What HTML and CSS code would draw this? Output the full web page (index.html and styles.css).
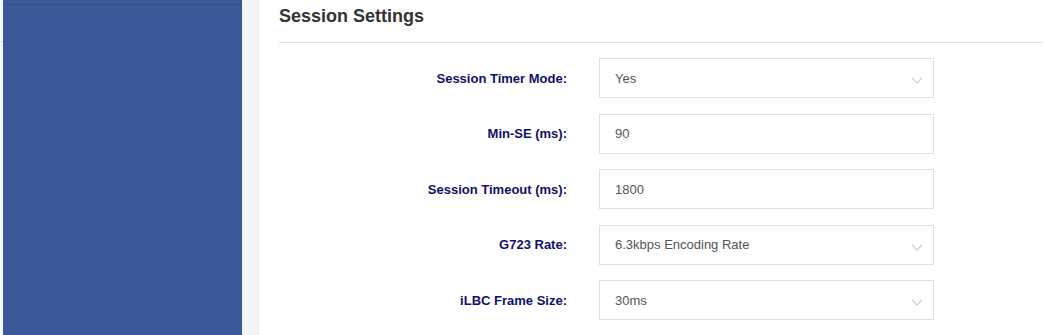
FILE: index.html
```html
<!DOCTYPE html>
<html lang="en">
<head>
    <meta charset="UTF-8">
    <meta name="viewport" content="width=device-width, initial-scale=1.0">
    <title>Session Settings</title>
    <link rel="stylesheet" href="styles.css">
</head>
<body>
    <div class="layout">
        <div class="edge"></div>
        <div class="sidebar">
            <div class="sidebar-top"></div>
        </div>
        <div class="gutter"></div>
        <div class="content">
            <h1 class="section-title">Session Settings</h1>

            <div class="form">
                <div class="form-row">
                    <label>Session Timer Mode:</label>
                    <div class="field select">
                        <span>Yes</span>
                        <svg class="chevron" width="12" height="7" viewBox="0 0 12 7"><path d="M1 1l5 5 5-5" fill="none" stroke="#c9ccd4" stroke-width="1.2"/></svg>
                    </div>
                </div>
                <div class="form-row">
                    <label>Min-SE (ms):</label>
                    <div class="field"><span>90</span></div>
                </div>
                <div class="form-row">
                    <label>Session Timeout (ms):</label>
                    <div class="field"><span>1800</span></div>
                </div>
                <div class="form-row">
                    <label>G723 Rate:</label>
                    <div class="field select">
                        <span>6.3kbps Encoding Rate</span>
                        <svg class="chevron" width="12" height="7" viewBox="0 0 12 7"><path d="M1 1l5 5 5-5" fill="none" stroke="#c9ccd4" stroke-width="1.2"/></svg>
                    </div>
                </div>
                <div class="form-row">
                    <label>iLBC Frame Size:</label>
                    <div class="field select">
                        <span>30ms</span>
                        <svg class="chevron" width="12" height="7" viewBox="0 0 12 7"><path d="M1 1l5 5 5-5" fill="none" stroke="#c9ccd4" stroke-width="1.2"/></svg>
                    </div>
                </div>
            </div>
        </div>
    </div>
</body>
</html>
```

FILE: styles.css
```css
body {
    margin: 0;
    font-family: "Liberation Sans", Arial, sans-serif;
    background-color: white;
    overflow: hidden;
}
.layout {
    display: flex;
    height: 335px;
}
.edge {
    width: 3px;
    flex-shrink: 0;
    background-color: #f7f7f9;
    background-image: linear-gradient(#dcdde2, #dcdde2);
    background-size: 3px 1px;
    background-position: 0 41px;
    background-repeat: no-repeat;
}
.sidebar {
    width: 239px;
    flex-shrink: 0;
    background-color: #3b5998;
}
.sidebar-top {
    height: 4px;
    border-bottom: 1px solid #34508a;
}
.gutter {
    width: 16px;
    flex-shrink: 0;
    background-color: #f3f5f9;
    border-right: 1px solid #e6e9f1;
}
.content {
    flex: 1;
    padding: 0 1px 0 20px;
}
.section-title {
    margin: 0;
    padding-top: 6px;
    height: 36px;
    font-size: 18px;
    line-height: 20px;
    font-weight: bold;
    color: #333;
    border-bottom: 1px solid #dfe0e6;
}
.form {
    display: flex;
    flex-direction: column;
    gap: 15.5px;
    padding-top: 15px;
}
.form-row {
    display: grid;
    grid-template-columns: 288px 335px;
    column-gap: 32px;
    align-items: center;
}
.form-row label {
    text-align: right;
    font-size: 13px;
    font-weight: bold;
    color: #10106a;
}
.field {
    position: relative;
    height: 40px;
    box-sizing: border-box;
    border: 1px solid #dcdfe6;
    display: flex;
    align-items: center;
    padding-left: 15px;
    font-size: 13px;
    color: #555;
}
.chevron {
    position: absolute;
    right: 10px;
    top: 18px;
}
```
